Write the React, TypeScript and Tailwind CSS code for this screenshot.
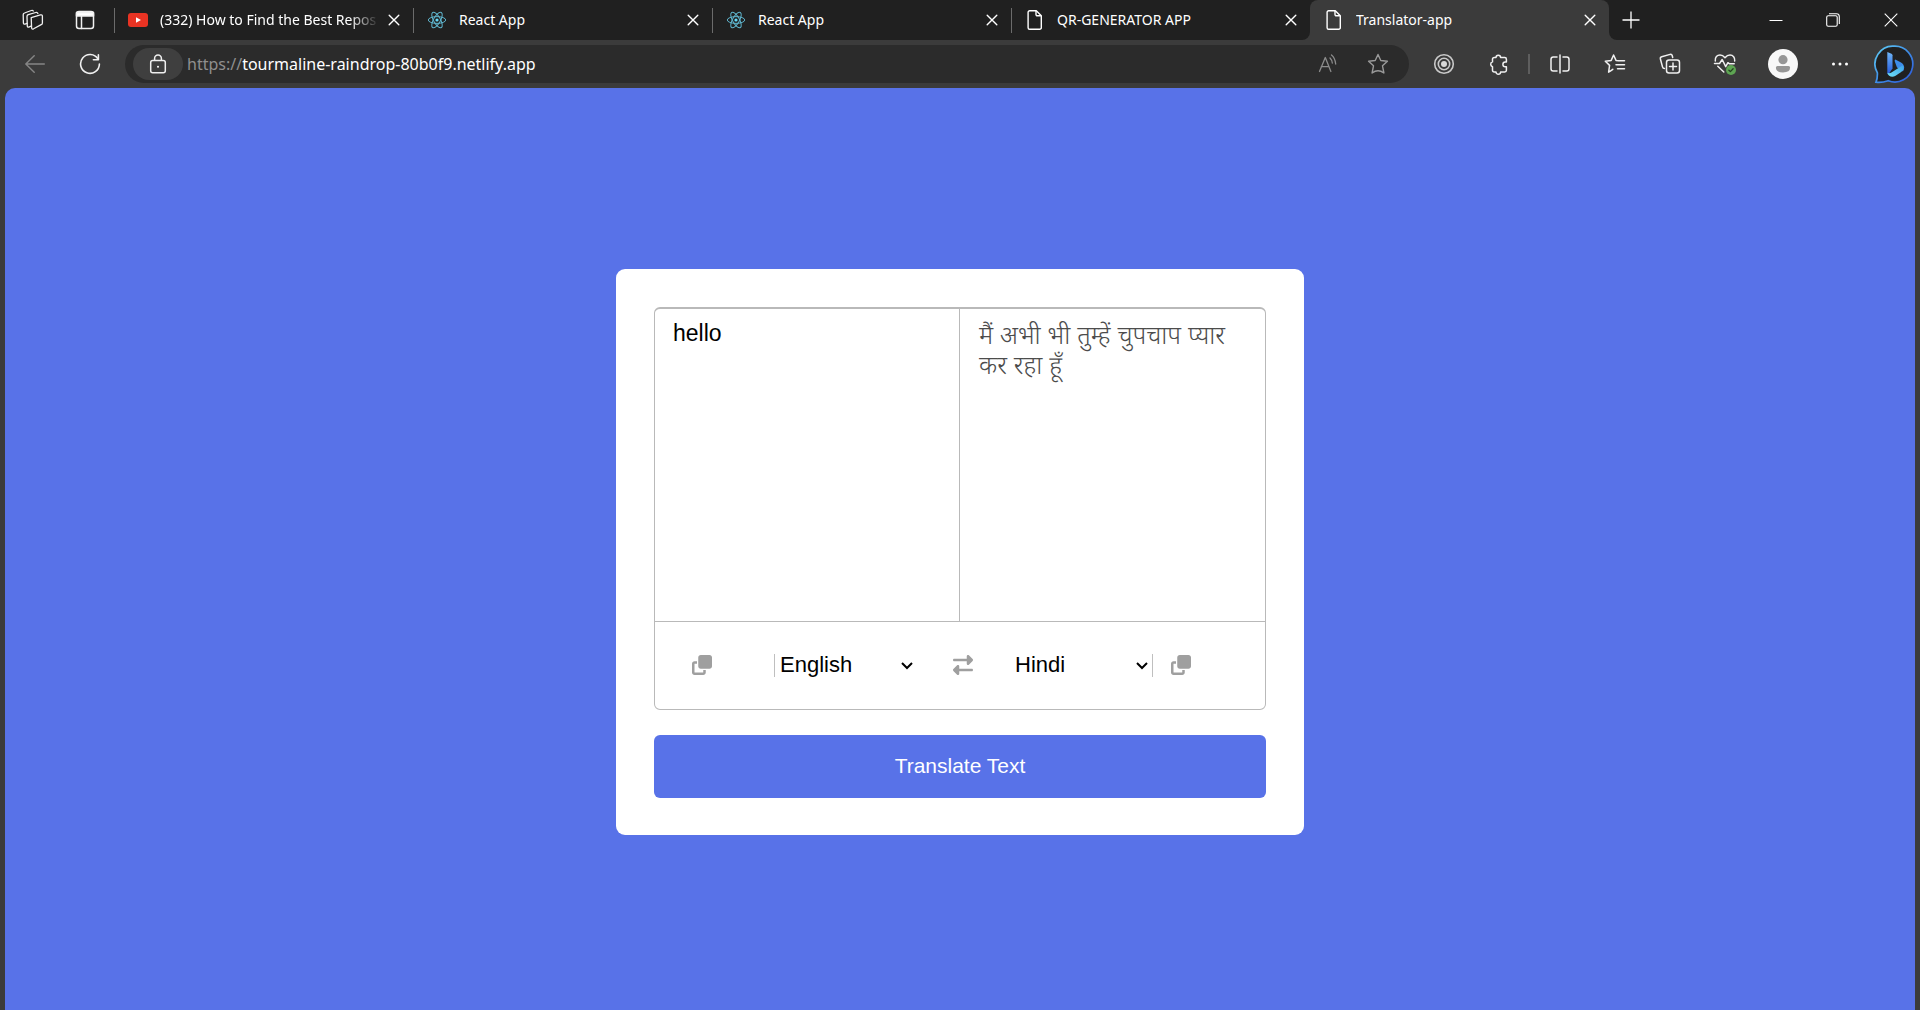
import { useState, type ReactNode } from "react";
import { FaClone, FaRightLeft } from "react-icons/fa6";

function ReactLogo() {
  return (
    <svg width="20" height="20" viewBox="0 0 20 20" fill="none" stroke="#5fb4cc" strokeWidth="1">
      <ellipse cx="10" cy="10" rx="8.7" ry="3.4" />
      <ellipse cx="10" cy="10" rx="8.7" ry="3.4" transform="rotate(60 10 10)" />
      <ellipse cx="10" cy="10" rx="8.7" ry="3.4" transform="rotate(120 10 10)" />
      <circle cx="10" cy="10" r="1.6" fill="#61dafb" stroke="none" />
    </svg>
  );
}

function PageIcon() {
  return (
    <svg width="20" height="22" viewBox="0 0 20 22" fill="none" stroke="#fff" strokeWidth="1.4" strokeLinejoin="round">
      <path d="M4.7 1.7h6.6l5 5v12a1.6 1.6 0 0 1-1.6 1.6h-10a1.6 1.6 0 0 1-1.6-1.6V3.3a1.6 1.6 0 0 1 1.6-1.6Z" />
      <path d="M11 1.9v3.6a1.3 1.3 0 0 0 1.3 1.3h3.8" />
    </svg>
  );
}

function YoutubeIcon() {
  return (
    <svg width="20" height="20" viewBox="0 0 20 20">
      <rect y="3" width="20" height="14" rx="3" fill="#e93323" />
      <path d="M8 7.2v5.6l5-2.8Z" fill="#fff" />
    </svg>
  );
}

function CloseIcon() {
  return (
    <svg width="12" height="12" viewBox="0 0 12 12" stroke="#fff" strokeWidth="1.4" strokeLinecap="round">
      <path d="M1.2 1.2l9.6 9.6M10.8 1.2l-9.6 9.6" />
    </svg>
  );
}

function Tab({ icon, title, active, first }: { icon: ReactNode; title: string; active?: boolean; first?: boolean }) {
  return (
    <div className={`relative flex h-10 min-w-0 flex-[0_1_299px] items-center pr-[13px] pl-[14px] ${active ? "rounded-t-lg bg-[#3b3b3b]" : ""}`}>
      {!active && <span className="absolute top-2 left-0 h-[25px] w-px bg-[#6b6b6b]" />}
      {active && (
        <>
          <span className="absolute bottom-0 -left-2 size-2 bg-[#3b3b3b]">
            <span className="block size-2 rounded-br-lg bg-[#202020]" />
          </span>
          <span className="absolute -right-2 bottom-0 size-2 bg-[#3b3b3b]">
            <span className="block size-2 rounded-bl-lg bg-[#202020]" />
          </span>
        </>
      )}
      <a href="#" className="flex min-w-0 flex-1 items-center gap-3">
        <span className="shrink-0">{icon}</span>
        <span className={`min-w-0 flex-1 overflow-hidden text-[14px] leading-5 whitespace-nowrap text-white ${first ? "[mask-image:linear-gradient(to_right,#000_84%,transparent_97%)]" : ""}`}>
          {title}
        </span>
      </a>
      <button aria-label={`Close ${title}`} className="flex h-6 w-[14px] shrink-0 items-center justify-end">
        <CloseIcon />
      </button>
    </div>
  );
}

function ToolButton({ label, className = "w-[55px]", children }: { label: string; className?: string; children: ReactNode }) {
  return (
    <button aria-label={label} className={`flex h-10 shrink-0 items-center justify-center ${className}`}>
      {children}
    </button>
  );
}

const line = { fill: "none", stroke: "#f0f0f0", strokeWidth: 1.5, strokeLinecap: "round", strokeLinejoin: "round" } as const;

function TabStrip() {
  return (
    <div className="flex h-10 items-center bg-[#202020]">
      <ToolButton label="Workspaces" className="w-[65px]">
        <svg width="22" height="22" viewBox="0 0 22 22" {...line} strokeWidth={1.3}>
          <path d="M9.2 8.6l9.2-2.7q2-.5 2 1.4v6.6q0 1.2-1.2 1.7l-7.6 4.2q-1.9.9-2-1z" />
          <path d="M9 17.2l-2.2.9q-1.4.4-1.5-1.1L5 7.4q0-1.3 1.3-1.7l7.4-2.2q1.7-.5 2.2 1" />
          <path d="M5 14.4l-2 .7Q1.500 15.400 1.400 14L1.200 5.700q0-1.300 1.300-1.700L9.300 1.500q1.400-.5 2 .5" />
        </svg>
      </ToolButton>
      <ToolButton label="Tab actions" className="w-[49px] pr-[9px]">
        <svg width="20" height="20" viewBox="0 0 20 20" {...line}>
          <rect x="1.500" y="1.500" width="17" height="17" rx="2.500" />
          <path d="M1.500 2.500h17V6h-17z" fill="#fff" />
          <path d="M6.500 6v12.500" />
        </svg>
      </ToolButton>
      <nav className="flex min-w-0 flex-[0_1_1495px]" aria-label="Tabs">
        <Tab icon={<YoutubeIcon />} title="(332) How to Find the Best Repos" first />
        <Tab icon={<ReactLogo />} title="React App" />
        <Tab icon={<ReactLogo />} title="React App" />
        <Tab icon={<PageIcon />} title="QR-GENERATOR APP" />
        <Tab icon={<PageIcon />} title="Translator-app" active />
      </nav>
      <ToolButton label="New tab" className="w-[44px]">
        <svg width="18" height="18" viewBox="0 0 18 18" stroke="#fff" strokeWidth="1.3">
          <path d="M9 .5v17M.5 9h17" />
        </svg>
      </ToolButton>
      <div className="ml-auto flex">
        <ToolButton label="Minimize" className="w-[57px]">
          <svg width="14" height="14" viewBox="0 0 14 14" stroke="#fff">
            <path d="M.5 7.500h13" />
          </svg>
        </ToolButton>
        <ToolButton label="Restore" className="w-[58px]">
          <svg width="14" height="14" viewBox="0 0 14 14" fill="none" stroke="#fff" strokeWidth="1.100">
            <rect x=".7" y="2.700" width="10.500" height="10.500" rx="1.500" />
            <path d="M3 .7h7.500a2.800 2.800 0 0 1 2.800 2.800V11" />
          </svg>
        </ToolButton>
        <ToolButton label="Close window" className="w-[58px]">
          <svg width="14" height="14" viewBox="0 0 14 14" stroke="#fff" strokeWidth="1.100">
            <path d="M.7.7l12.600 12.600M13.300.7L.7 13.300" />
          </svg>
        </ToolButton>
      </div>
    </div>
  );
}

function BingLogo() {
  return (
    <svg width="40" height="40" viewBox="0 0 40 40">
      <defs>
        <linearGradient id="ring" x1="0" y1="0" x2="1" y2="1">
          <stop offset="0" stopColor="#62d0f5" />
          <stop offset=".5" stopColor="#3f8fe8" />
          <stop offset="1" stopColor="#2b55d8" />
        </linearGradient>
        <linearGradient id="stem" x1="0" y1="0" x2="0" y2="1">
          <stop offset="0" stopColor="#6fb6f7" />
          <stop offset="1" stopColor="#2358dc" />
        </linearGradient>
        <linearGradient id="bowl" x1="1" y1="0" x2="0" y2="1">
          <stop offset="0" stopColor="#3fa4e8" />
          <stop offset="1" stopColor="#6fe0f8" />
        </linearGradient>
      </defs>
      <path d="M20.500 2.200a17.900 17.900 0 1 1-6.300 34.500C10.500 38 5.500 38.600 2 38.200c1.500-3.200 1.500-6 1.400-9.300A17.900 17.900 0 0 1 20.500 2.200Z" fill="#202020" stroke="url(#ring)" strokeWidth="1.700" />
      <path d="M13.300 7.900l4.200 1.800q1 .5 1 1.600v13.200l-4.300 6.300q-.9-1-.9-2.600z" fill="url(#stem)" />
      <path d="M21.300 15.400l5.700 3q3.200 1.900 3.200 5.200 0 2.200-1.500 3.900-1-1.700-3-2.500l-2-.9q-.6-.3-.9-1l-2-5.700q-.5-1.700.5-2z" fill="#3d8ce8" />
      <path d="M28.800 21.200q2.200 4.100-1.600 6.800l-5.600 3.700q-3.700 2-6.700-.3-1.200-1-1.500-2.700 1.800 1 4-.3z" fill="url(#bowl)" />
    </svg>
  );
}

function Toolbar() {
  return (
    <div className="flex h-12 items-center bg-[#3b3b3b]">
      <ToolButton label="Back" className="w-[70px]">
        <svg width="20" height="18" viewBox="0 0 20 18" {...line} stroke="#868686" strokeWidth={1.400}>
          <path d="M19.300 9H.8M9.200.7L.8 9l8.400 8.300" />
        </svg>
      </ToolButton>
      <ToolButton label="Refresh" className="mr-[15px] w-10">
        <svg width="22" height="22" viewBox="0 0 22 22" {...line} strokeWidth={1.600}>
          <path d="M19 6A9.400 9.400 0 1 0 20.400 11" />
          <path d="M19.400 1.700v5h-5" />
        </svg>
      </ToolButton>
      <div className="flex h-[38px] min-w-0 flex-1 items-center rounded-full bg-[#2b2b2b] pl-2">
        <button aria-label="Site information" className="flex h-8 w-[50px] shrink-0 items-center justify-center rounded-full bg-[#3f3f3f]">
          <svg width="18" height="20" viewBox="0 0 18 20" {...line}>
            <rect x="1.700" y="6.500" width="14.600" height="12.300" rx="2" />
            <path d="M5.600 6.300V4.400a3.400 3.400 0 0 1 6.800 0v1.900" />
            <circle cx="9" cy="12.700" r="1" fill="#fff" stroke="none" />
          </svg>
        </button>
        <a href="#" className="ml-1 min-w-0 flex-1 truncate text-[16px] leading-6 text-white">
          <span className="text-[#8f8f8f]">https://</span>tourmaline-raindrop-80b0f9.netlify.app
        </a>
        <ToolButton label="Read aloud" className="w-[50px]">
          <svg width="20" height="20" viewBox="0 0 20 20" {...line} stroke="#8c8c8c" strokeWidth={1.300}>
            <path d="M1.500 17.500L7.300 3.500l5.600 14M3.300 12.700h7.700" />
            <path d="M12 4q2 2 2.300 5M13.500 1q3.600 3 4.200 9" />
          </svg>
        </ToolButton>
        <ToolButton label="Add to favorites" className="mr-[6px] w-[50px]">
          <svg width="22" height="22" viewBox="0 0 22 22" {...line} stroke="#9a9a9a" strokeWidth={1.400}>
            <path d="M11 1.500l2.800 6 6.600.8-4.900 4.500 1.400 7.200q-3-2.300-5.900-2.300T5.100 20l1.400-7.200-4.900-4.500 6.600-.8z" />
          </svg>
        </ToolButton>
      </div>
      <div className="flex shrink-0 items-center pl-[7px]">
        <ToolButton label="Recorder">
          <svg width="22" height="22" viewBox="0 0 22 22" fill="none" stroke="#c9c9c9" strokeWidth="1.600">
            <circle cx="11" cy="11" r="9.300" />
            <circle cx="11" cy="11" r="5.700" />
            <circle cx="11" cy="11" r="3" fill="#d8d8d8" stroke="none" />
          </svg>
        </ToolButton>
        <ToolButton label="Extensions">
          <svg width="20" height="21" viewBox="0 0 20 21" {...line}>
            <path d="M7 3.500a2.300 2.300 0 0 1 4.600 0h4.100q1.700 0 1.700 1.700v2.900h-1.200a2.300 2.300 0 0 0 0 4.600h1.200v3.500q0 1.700-1.700 1.700h-4.100a2.300 2.300 0 0 1-4.600 0H5.200q-1.700 0-1.700-1.700v-3.500a2.500 2.500 0 0 1 0-4.800V5.200q0-1.700 1.700-1.700z" />
          </svg>
        </ToolButton>
        <span className="mx-[2px] h-5 w-[2px] bg-[#5e5e5e]" />
        <ToolButton label="Split screen">
          <svg width="20" height="20" viewBox="0 0 20 20" {...line}>
            <path d="M7 3H3.300Q1 3 1 5.300v9.400Q1 17 3.300 17H7M13 3h3.700Q19 3 19 5.300v9.400q0 2.300-2.300 2.300H13M10 1v18" />
          </svg>
        </ToolButton>
        <ToolButton label="Favorites">
          <svg width="22" height="22" viewBox="0 0 22 22" {...line}>
            <path d="M14.800 7.700l-2.800-.3L9.600 2 7.200 7.400l-5.900.8 4.300 4.200-1 6.800q2-1.200 4.200-2.900" />
            <path d="M15.500 7.700h5M12 11.700h8.500M13.500 15.700h7" />
          </svg>
        </ToolButton>
        <ToolButton label="Collections">
          <svg width="22" height="22" viewBox="0 0 22 22" {...line}>
            <path d="M5.500 15.500q-1.600 0-2-1.600L1.400 6q-.4-1.700 1.300-2.200l8.400-2.400q1.600-.4 2.100 1.100l.5 2" />
            <rect x="7.500" y="7" width="13" height="13" rx="2.500" />
            <path d="M14 10v7M10.500 13.500h7" />
          </svg>
        </ToolButton>
        <ToolButton label="Browser essentials">
          <svg width="24" height="24" viewBox="0 0 24 24" {...line}>
            <path d="M2.300 9C1.800 5.300 4.200 3 7 3q2.800 0 5 2.700Q14.200 3 17 3c3 0 5.200 2.500 4.700 6M4.800 14.300l6 5.700" />
            <path d="M1.500 11.500h5l2.700-4 3.500 7.200 2.200-4 1.300 1h5" />
            <circle cx="18" cy="18" r="5" fill="#5ea553" stroke="none" />
            <path d="M15.900 18.200l1.500 1.400 2.700-2.900" stroke="#24421f" strokeWidth="1.300" />
          </svg>
        </ToolButton>
        <ToolButton label="Profile" className="w-[61px]">
          <svg width="30" height="30" viewBox="0 0 30 30">
            <circle cx="15" cy="15" r="15" fill="#f8f8f8" />
            <circle cx="15" cy="10.700" r="4.600" fill="#969696" />
            <path d="M9.500 17h11q1.600 0 1.600 1.600 0 4.900-7.100 4.900t-7.100-4.900Q7.900 17 9.500 17Z" fill="#969696" />
          </svg>
        </ToolButton>
        <ToolButton label="Settings and more" className="w-[54px]">
          <svg width="18" height="4" viewBox="0 0 18 4" fill="#fff">
            <circle cx="2.500" cy="2" r="1.500" />
            <circle cx="9" cy="2" r="1.500" />
            <circle cx="15.500" cy="2" r="1.500" />
          </svg>
        </ToolButton>
        <ToolButton label="Bing" className="w-[53px]">
          <BingLogo />
        </ToolButton>
      </div>
    </div>
  );
}

function LanguageSelect({ label, value, onChange, divider }: { label: string; value: string; onChange: (v: string) => void; divider: string }) {
  return (
    <div className={`relative flex h-[23px] w-[143px] items-center border-[#bfbfbf] ${divider}`}>
      <select
        aria-label={label}
        value={value}
        onChange={(e) => onChange(e.target.value)}
        className="h-8 w-full shrink-0 appearance-none bg-transparent pb-px pl-[5px] text-[22px] leading-8 text-black outline-none"
      >
        <option>English</option>
        <option>Hindi</option>
      </select>
      <svg className="pointer-events-none absolute top-2 right-1" width="12" height="8" viewBox="0 0 12 8" fill="none" stroke="#000" strokeWidth="2">
        <path d="M1 1l5 5 5-5" />
      </svg>
    </div>
  );
}

function Translator() {
  const [source, setSource] = useState("hello");
  const [from, setFrom] = useState("English");
  const [to, setTo] = useState("Hindi");
  const area = "block h-[312px] w-full resize-none bg-transparent";
  return (
    <main className="w-full max-w-[688px] rounded-[9px] bg-white p-[38px] pb-[37px] font-['Liberation_Sans','Noto_Sans_Devanagari','Noto_Sans',sans-serif]">
      <div className="rounded-md border border-t-2 border-[#b9b9b9]">
        <div className="grid grid-cols-2 divide-x divide-[#b9b9b9] border-b border-[#b9b9b9]">
          <textarea
            aria-label="Text to translate"
            spellCheck={false}
            value={source}
            onChange={(e) => setSource(e.target.value)}
            className={`${area} px-[18px] pt-[11px] text-[23px] leading-[26px] text-black outline-none`}
          />
          <textarea
            aria-label="Translation"
            readOnly
            spellCheck={false}
            value="मैं अभी भी तुम्हें चुपचाप प्यार कर रहा हूँ"
            className={`${area} px-[19px] pt-[11px] text-[25px] leading-[30px] font-light text-[#4c4c4c] outline-none`}
          />
        </div>
        <div className="flex h-[87px] items-center pb-px pl-[37px] text-[20px] text-[#9f9f9f]">
          <button aria-label="Copy source text" className="mr-[62px]">
            <FaClone />
          </button>
          <LanguageSelect label="Source language" value={from} onChange={setFrom} divider="border-l" />
          <button
            aria-label="Swap languages"
            className="mr-[37px] ml-9"
            onClick={() => {
              setFrom(to);
              setTo(from);
            }}
          >
            <FaRightLeft />
          </button>
          <LanguageSelect label="Target language" value={to} onChange={setTo} divider="border-r" />
          <button aria-label="Copy translation" className="ml-[18px]">
            <FaClone />
          </button>
        </div>
      </div>
      <button className="mt-[25px] block h-[63px] w-full rounded-md bg-[#5872e8] pb-0.5 text-[21px] text-white">Translate Text</button>
    </main>
  );
}

export default function App() {
  return (
    <div className="flex min-h-screen flex-col bg-[#3b3b3b] font-['Noto_Sans','Open_Sans',sans-serif]">
      <TabStrip />
      <Toolbar />
      <div className="mx-[5px] flex flex-1 items-center justify-center rounded-t-[10px] bg-[#5872e8] pt-1.5">
        <Translator />
      </div>
    </div>
  );
}
